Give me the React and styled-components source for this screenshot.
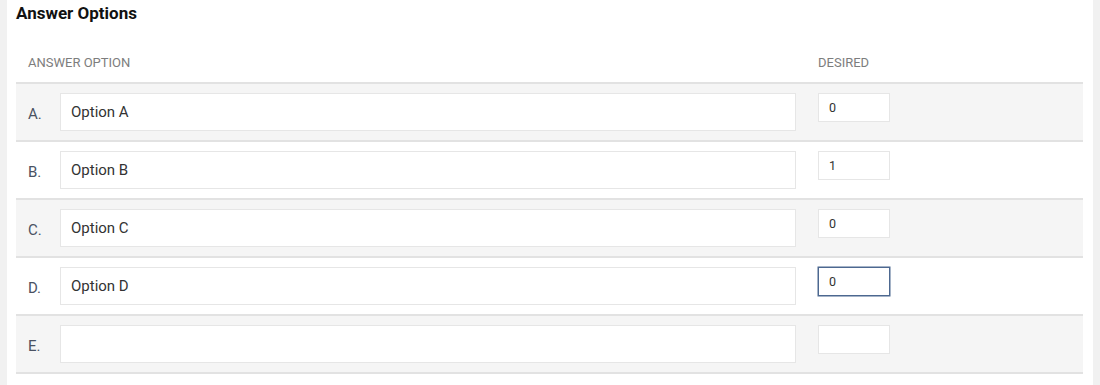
import React from 'react';
import styled, { createGlobalStyle } from 'styled-components';

const GlobalStyle = createGlobalStyle`
  html, body {
    margin: 0;
    padding: 0;
    background: #f1f1f1;
    font-family: Roboto, "Liberation Sans", sans-serif;
  }
`;

const Panel = styled.section`
  margin: 0 7px;
  padding: 0 9px 12px;
  background: #fff;
  min-height: 385px;
  box-sizing: border-box;
`;

const Title = styled.h2`
  margin: 0;
  padding-top: 3px;
  height: 41px;
  font-size: 17px;
  line-height: 20px;
  font-weight: 700;
  color: #111;
`;

const Table = styled.div`
  width: 1067px;
`;

const Row = styled.div`
  display: grid;
  grid-template-columns: 790px 1fr;
  align-items: start;
  box-sizing: border-box;
  height: ${p => (p.header ? '40px' : '58px')};
  padding-top: ${p => (p.header ? '0' : '9px')};
  background: ${p => (p.shaded ? '#f5f5f5' : '#fff')};
  border-bottom: 2px solid #e2e2e2;
`;

const HeadCell = styled.div`
  padding: 0 12px;
  line-height: 38px;
  font-size: 13px;
  color: #7d7d7d;
  text-transform: uppercase;
`;

const OptionCell = styled.div`
  display: flex;
  align-items: center;
  padding: 0 10px 0 12px;
`;

const Letter = styled.span`
  width: 32px;
  flex: none;
  font-size: 15px;
  color: #4a5262;
  padding-top: 4px;
`;

const TextInput = styled.input`
  flex: 1;
  min-width: 0;
  height: 38px;
  box-sizing: border-box;
  padding: 0 10px;
  border: 1px solid #e6e6e6;
  background: #fff;
  font-family: inherit;
  font-size: 15px;
  color: #333;
  outline: none;
`;

const DesiredCell = styled.div`
  padding: 0 12px;
`;

const NumberInput = styled.input`
  display: block;
  width: 72px;
  height: 29px;
  box-sizing: border-box;
  padding: 0 10px;
  border: 1px solid ${p => (p.focused ? '#4d6890' : '#e6e6e6')};
  box-shadow: ${p => (p.focused ? '0 0 0 0.5px #4d6890' : 'none')};
  background: #fff;
  font-family: inherit;
  font-size: 12.5px;
  color: #333;
  outline: none;
`;

const options = [
  { letter: 'A', text: 'Option A', desired: '0' },
  { letter: 'B', text: 'Option B', desired: '1' },
  { letter: 'C', text: 'Option C', desired: '0' },
  { letter: 'D', text: 'Option D', desired: '0', focused: true },
  { letter: 'E', text: '', desired: '' },
];

export default function App() {
  return (
    <>
      <GlobalStyle />
      <Panel>
        <Title>Answer Options</Title>
        <Table>
          <Row header>
            <HeadCell>Answer Option</HeadCell>
            <HeadCell>Desired</HeadCell>
          </Row>
          {options.map((o, i) => (
            <Row key={o.letter} shaded={i % 2 === 0}>
              <OptionCell>
                <Letter>{o.letter}.</Letter>
                <TextInput defaultValue={o.text} />
              </OptionCell>
              <DesiredCell>
                <NumberInput defaultValue={o.desired} focused={o.focused} />
              </DesiredCell>
            </Row>
          ))}
        </Table>
      </Panel>
    </>
  );
}
